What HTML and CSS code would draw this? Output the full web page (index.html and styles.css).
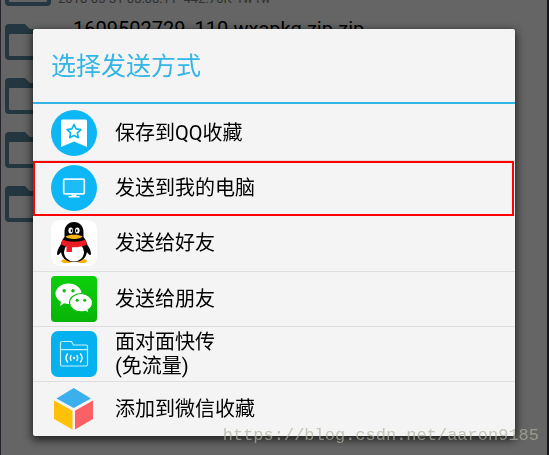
FILE: index.html
```html
<!DOCTYPE html>
<html lang="zh-CN">

<head>
    <meta charset="UTF-8">
    <meta name="viewport" content="width=device-width, initial-scale=1.0">
    <title>选择发送方式</title>
    <link rel="stylesheet" href="styles.css">
</head>

<body>
    <svg class="defs" width="0" height="0" aria-hidden="true">
        <symbol id="folder" viewBox="0 0 46 36">
            <path d="M4 0h16l5 5h17a4 4 0 0 1 4 4v23a4 4 0 0 1-4 4H4a4 4 0 0 1-4-4V4a4 4 0 0 1 4-4zM5 10a1 1 0 0 0-1 1v20a1 1 0 0 0 1 1h36a1 1 0 0 0 1-1V11a1 1 0 0 0-1-1z" fill="#243740" fill-rule="evenodd"/>
        </symbol>
    </svg>

    <!-- 文件列表 -->
    <ul class="files">
        <li class="file">
            <svg class="folder"><use href="#folder"/></svg>
            <div class="info">
                <div class="name"></div>
                <div class="meta">2018-05-31 08:08:11&nbsp; 442.76K -rw-rw</div>
            </div>
        </li>
        <li class="file">
            <svg class="folder"><use href="#folder"/></svg>
            <div class="info">
                <div class="name">_1609502729_110.wxapkg.zip.zip</div>
            </div>
        </li>
        <li class="file"><svg class="folder"><use href="#folder"/></svg></li>
        <li class="file"><svg class="folder"><use href="#folder"/></svg></li>
        <li class="file"><svg class="folder"><use href="#folder"/></svg></li>
    </ul>

    <!-- 弹出框 -->
    <div class="mask">
        <div class="dialog" role="dialog" aria-labelledby="title">
            <h1 class="title" id="title">选择发送方式</h1>
            <ul class="list">
                <li>
                    <button class="item" type="button">
                        <svg class="icon" viewBox="0 0 46 46">
                            <circle cx="23" cy="23" r="23" fill="#0db7f6"/>
                            <path d="M11.500 9.500h23a1.500 1.500 0 0 1 1.500 1.500v26l-13-5.500L10 37V11a1.500 1.500 0 0 1 1.500-1.500z" fill="#fff"/>
                            <path d="M23 14.500l2.100 4.400 4.800.7-3.500 3.300.9 4.800-4.300-2.300-4.300 2.300.9-4.800-3.500-3.300 4.800-.7z" fill="none" stroke="#0db7f6" stroke-width="1.700" stroke-linejoin="round"/>
                        </svg>
                        <span>保存到QQ收藏</span>
                    </button>
                </li>
                <li>
                    <button class="item current" type="button">
                        <svg class="icon" viewBox="0 0 46 46">
                            <circle cx="23" cy="23" r="23" fill="#0db7f6"/>
                            <rect x="12.700" y="14.200" width="20.600" height="14.600" rx="1" fill="#1cbcf6" stroke="#e8f9ff" stroke-width="1.700"/>
                            <path d="M20.500 29.500h5v1.500h3v1.500h-11V31h3z" fill="#fff"/>
                        </svg>
                        <span>发送到我的电脑</span>
                    </button>
                </li>
                <li>
                    <button class="item" type="button">
                        <svg class="icon" viewBox="0 0 46 46">
                            <rect width="46" height="46" rx="9" fill="#fff"/>
                            <ellipse cx="15.500" cy="41" rx="5" ry="2" fill="#f9ae08"/>
                            <ellipse cx="31" cy="41" rx="5" ry="2" fill="#f9ae08"/>
                            <path d="M23 2c-6 0-9.500 4.500-9.500 10v5c-2 2-3 5-4 8-2 3-3.500 6-3.500 9 .5 2 2.500.5 4-2 1 6 5 10 13 10s12-4 13-10c1.500 2.500 3.500 4 4 2 0-3-1.500-6-3.500-9-1-3-2-6-4-8v-5C32.500 6.500 29 2 23 2z" fill="#050505"/>
                            <ellipse cx="23" cy="32" rx="10" ry="9.500" fill="#fff"/>
                            <ellipse cx="19.700" cy="10.500" rx="2.300" ry="3.100" fill="#fff"/>
                            <ellipse cx="26.300" cy="10.500" rx="2.300" ry="3.100" fill="#fff"/>
                            <ellipse cx="20.500" cy="10.700" rx=".9" ry="1.400"/>
                            <ellipse cx="25.700" cy="10.700" rx=".9" ry="1.400"/>
                            <path d="M14.500 16.500c4-2.300 13-2.300 17 0-2 3.300-15 3.300-17 0z" fill="#fbb414"/>
                            <path d="M11.500 19.500c7 3 16 3 23 0l1.500 5c-4 2-9 3-15 2.800V32h-5.500v-5.500c-2-.5-4-1.300-5.500-2z" fill="#ed1c24"/>
                        </svg>
                        <span>发送给好友</span>
                    </button>
                </li>
                <li>
                    <button class="item" type="button">
                        <svg class="icon" viewBox="0 0 46 46">
                            <defs>
                                <linearGradient id="green" x2="0" y2="1">
                                    <stop stop-color="#0bd00b"/>
                                    <stop offset="1" stop-color="#08b408"/>
                                </linearGradient>
                            </defs>
                            <rect width="46" height="46" rx="4" fill="url(#green)"/>
                            <path d="M17.500 7.500c7.200 0 13 4.500 13 10.200s-5.800 10.200-13 10.200c-1.500 0-3-.2-4.300-.6L9 30l1-4.300c-3.300-1.800-5.500-4.700-5.500-8 0-5.700 5.800-10.200 13-10.200z" fill="#fff"/>
                            <path d="M30 17.500c6.300 0 11.500 4.200 11.500 9.200 0 2.900-1.700 5.400-4.300 7l.8 3.500-3.800-2c-1.300.4-2.700.6-4.200.6-6.300 0-11.500-4.100-11.500-9.100s5.200-9.200 11.500-9.200z" fill="#fff" stroke="#0abf0a" stroke-width="1.200"/>
                            <g fill="#0ac00a">
                                <circle cx="13.200" cy="14.800" r="1.700"/>
                                <circle cx="22" cy="14.800" r="1.700"/>
                                <circle cx="26.200" cy="24.300" r="1.500"/>
                                <circle cx="33.700" cy="24.300" r="1.500"/>
                            </g>
                        </svg>
                        <span>发送给朋友</span>
                    </button>
                </li>
                <li>
                    <button class="item" type="button">
                        <svg class="icon" viewBox="0 0 46 46">
                            <rect width="46" height="46" rx="7" fill="#06b1f0"/>
                            <g fill="none" stroke="#c9f0fd" stroke-width="1.200" stroke-linecap="round">
                                <path d="M9.500 18.700V12a1.500 1.500 0 0 1 1.500-1.500h9.500l2 3.500H35a1.500 1.500 0 0 1 1.500 1.500v18A1.500 1.500 0 0 1 35 35H11a1.500 1.500 0 0 1-1.500-1.500V18.700h27"/>
                                <path d="M20 24.700q-1.500 2.300 0 4.600M26 24.700q1.500 2.300 0 4.600M16.500 23q-3 4 0 8M29.500 23q3 4 0 8" stroke="#fff" stroke-width="1.400"/>
                            </g>
                            <circle cx="23" cy="27" r="1.200" fill="#fff"/>
                        </svg>
                        <span>面对面快传<br>(免流量)</span>
                    </button>
                </li>
                <li>
                    <button class="item" type="button">
                        <svg class="icon" viewBox="0 0 46 46">
                            <path d="M22.700 2L40 12.500 22.700 22 5.500 12.500z" fill="#3cb0ee"/>
                            <path d="M3 14.500l18.500 10.300V43.500L3 33z" fill="#ffc107"/>
                            <path d="M42 14.500L24 24.800V43.500L42 33z" fill="#fb6164"/>
                        </svg>
                        <span>添加到微信收藏</span>
                    </button>
                </li>
            </ul>
        </div>
    </div>

    <div class="watermark">https://blog.csdn.net/aaron9185</div>
</body>

</html>
```

FILE: styles.css
```css
* {
    box-sizing: border-box;
}

body {
    margin: 0;
    height: 100vh;
    overflow: hidden;
    background: #656565;
    border-left: 1px solid #26242c;
    border-right: 2px solid #15131b;
    font-family: Roboto, "Noto Sans CJK SC", sans-serif;
    color: #000;
}

ul {
    list-style: none;
    margin: 0;
    padding: 0;
}

.defs {
    display: block;
}

/* 文件列表 */
.files {
    margin-top: -39px;
}

.file {
    display: flex;
    align-items: center;
    gap: 7px;
    height: 54px;
    padding-left: 4px;
}

.folder {
    width: 46px;
    height: 36px;
    flex: none;
}

.info {
    height: 54px;
    white-space: nowrap;
}

.name {
    height: 30px;
    padding-left: 6px;
    font-size: 20px;
    line-height: 28px;
}

.meta {
    font-size: 13px;
    line-height: 16px;
    color: #303030;
}

/* 弹出框 */
.mask {
    position: fixed;
    top: 0;
    left: 0;
    width: 100%;
    height: 100%;
    display: flex;
    padding: 29px 34px 19px 33px;
}

.dialog {
    flex: 1;
    display: flex;
    flex-direction: column;
    background: #f4f4f4;
    border-radius: 2px;
    box-shadow: 0 3px 8px 1px rgba(0, 0, 0, .7);
}

.title {
    margin: 0;
    padding: 19px 18px 16px;
    border-bottom: 2px solid #33b5e5;
    font-size: 25px;
    font-weight: normal;
    line-height: 38px;
    color: #33b5e5;
}

.list {
    flex: 1;
    display: flex;
    flex-direction: column;
    padding-top: 2px;
}

.list li {
    flex: 1;
    display: flex;
}

.list li + li {
    border-top: 1px solid #dedede;
}

.item {
    position: relative;
    flex: 1;
    display: flex;
    align-items: center;
    gap: 18px;
    padding: 0 18px;
    border: 0;
    background: none;
    font-family: inherit;
    font-size: 20px;
    line-height: 24px;
    text-align: left;
    color: #000;
    cursor: pointer;
}

.icon {
    width: 46px;
    height: 46px;
    flex: none;
}

/* 红色标注框 */
.current::after {
    content: "";
    position: absolute;
    top: 0;
    right: 1px;
    bottom: -1px;
    left: 0;
    border: 2px solid #f00;
}

.watermark {
    position: fixed;
    right: 10px;
    bottom: 7px;
    font-family: "Liberation Mono", monospace;
    font-size: 17px;
    line-height: 24px;
    color: rgba(176, 176, 160, .7);
    pointer-events: none;
}
```
